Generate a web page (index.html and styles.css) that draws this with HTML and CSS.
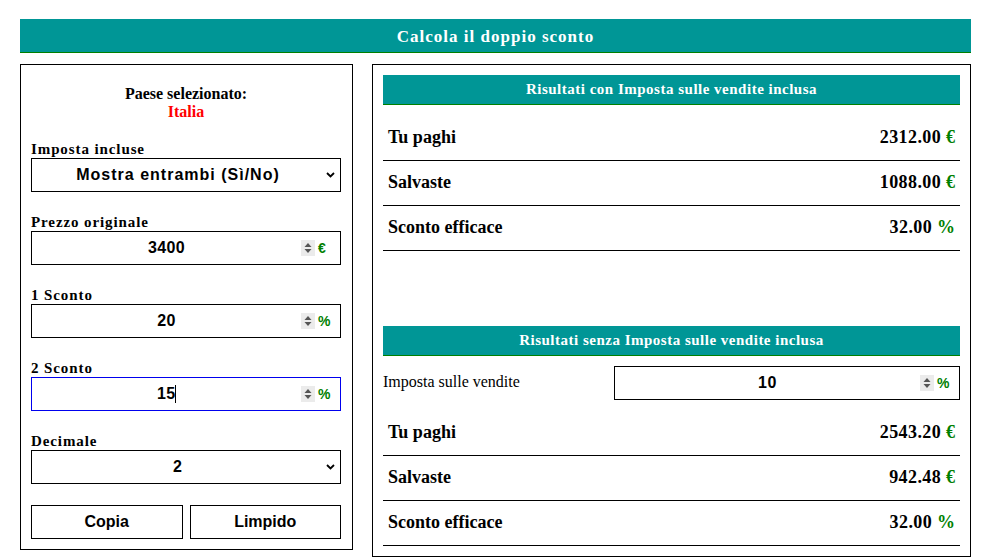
FILE: index.html
```html
<!DOCTYPE html>
<html lang="it">
<head>
<meta charset="utf-8">
<title>Calcola il doppio sconto</title>
<link rel="stylesheet" href="styles.css">
</head>
<body>
<div class="page">
  <header class="title">Calcola il doppio sconto</header>
  <div class="cols">
    <section class="left">
      <div class="country">
        <div>Paese selezionato:</div>
        <div class="red">Italia</div>
      </div>

      <div class="group first">
        <div class="lbl">Imposta incluse</div>
        <div class="field sel">
          <span class="txt sel-txt">Mostra entrambi (Sì/No)</span>
          <svg class="chev" width="9" height="6" viewBox="0 0 9 6"><path d="M1 1 L4.5 4.5 L8 1" fill="none" stroke="#000" stroke-width="1.8"/></svg>
        </div>
      </div>

      <div class="group">
        <div class="lbl">Prezzo originale</div>
        <div class="field num">
          <span class="txt">3400</span>
          <svg class="spin" width="14" height="16" viewBox="0 0 14 16"><rect width="14" height="16" fill="#ebebeb"/><path d="M3.5 7 L7 3 L10.5 7Z M3.5 9 L7 13 L10.5 9Z" fill="#555"/></svg>
          <span class="unit">€</span>
        </div>
      </div>

      <div class="group">
        <div class="lbl">1 Sconto</div>
        <div class="field num">
          <span class="txt">20</span>
          <svg class="spin" width="14" height="16" viewBox="0 0 14 16"><rect width="14" height="16" fill="#ebebeb"/><path d="M3.5 7 L7 3 L10.5 7Z M3.5 9 L7 13 L10.5 9Z" fill="#555"/></svg>
          <span class="unit">%</span>
        </div>
      </div>

      <div class="group">
        <div class="lbl">2 Sconto</div>
        <div class="field num focus">
          <span class="txt">15<span class="caret"></span></span>
          <svg class="spin" width="14" height="16" viewBox="0 0 14 16"><rect width="14" height="16" fill="#ebebeb"/><path d="M3.5 7 L7 3 L10.5 7Z M3.5 9 L7 13 L10.5 9Z" fill="#555"/></svg>
          <span class="unit">%</span>
        </div>
      </div>

      <div class="group">
        <div class="lbl">Decimale</div>
        <div class="field sel">
          <span class="txt sel-txt">2</span>
          <svg class="chev" width="9" height="6" viewBox="0 0 9 6"><path d="M1 1 L4.5 4.5 L8 1" fill="none" stroke="#000" stroke-width="1.8"/></svg>
        </div>
      </div>

      <div class="btns">
        <button class="btn">Copia</button>
        <button class="btn">Limpido</button>
      </div>
    </section>

    <section class="right">
      <div class="sec-h">Risultati con Imposta sulle vendite inclusa</div>
      <div class="rows">
        <div class="row"><span>Tu paghi</span><span class="val">2312.00 <span class="u">€</span></span></div>
        <div class="row"><span>Salvaste</span><span class="val">1088.00 <span class="u">€</span></span></div>
        <div class="row"><span>Sconto efficace</span><span class="val">32.00 <span class="u">%</span></span></div>
      </div>

      <div class="sec-h sec2">Risultati senza Imposta sulle vendite inclusa</div>
      <div class="tax">
        <span class="tax-l">Imposta sulle vendite</span>
        <div class="field num tax-in">
          <span class="txt">10</span>
          <svg class="spin" width="14" height="16" viewBox="0 0 14 16"><rect width="14" height="16" fill="#ebebeb"/><path d="M3.5 7 L7 3 L10.5 7Z M3.5 9 L7 13 L10.5 9Z" fill="#555"/></svg>
          <span class="unit">%</span>
        </div>
      </div>
      <div class="rows">
        <div class="row"><span>Tu paghi</span><span class="val">2543.20 <span class="u">€</span></span></div>
        <div class="row"><span>Salvaste</span><span class="val">942.48 <span class="u">€</span></span></div>
        <div class="row"><span>Sconto efficace</span><span class="val">32.00 <span class="u">%</span></span></div>
      </div>
    </section>
  </div>
</div>
</body>
</html>
```
FILE: styles.css
```css
body {
  margin: 0;
  background: #fff;
  color: #000;
  font-family: "Liberation Serif", "Times New Roman", serif;
}

.page {
  width: 951px;
  padding: 19px 12px 0 20px;
}

.title {
  height: 34px;
  box-sizing: border-box;
  padding-top: 3px;
  background: #009696;
  border-bottom: 1px solid #008000;
  color: #fff;
  font-weight: bold;
  font-size: 17px;
  letter-spacing: 1px;
  display: flex;
  align-items: center;
  justify-content: center;
}

.cols {
  display: flex;
  align-items: flex-start;
  gap: 19px;
  margin-top: 11px;
}

.left {
  width: 333px;
  box-sizing: border-box;
  border: 1px solid #000;
  padding: 20px 11px 10px 10px;
}

.country {
  text-align: center;
  font-weight: bold;
  font-size: 16px;
  line-height: 18px;
}

.red {
  color: #ff0000;
}

.group {
  margin-top: 22px;
}

.group.first {
  margin-top: 20px;
}

.lbl {
  font-weight: bold;
  font-size: 15px;
  line-height: 17px;
  letter-spacing: 0.9px;
}

.field {
  height: 34px;
  box-sizing: border-box;
  border: 1px solid #000;
  display: flex;
  align-items: center;
  font-family: "Liberation Sans", Arial, sans-serif;
  font-weight: bold;
  font-size: 16px;
  background: #fff;
}

.field.focus {
  border-color: #0000ee;
}

.txt {
  flex: 1;
  text-align: center;
  letter-spacing: 0.4px;
}

.sel-txt {
  letter-spacing: 1px;
}

.caret {
  display: inline-block;
  width: 1px;
  height: 18px;
  background: #000;
  vertical-align: -4px;
  margin-left: -0.4px;
}

.chev {
  margin-left: 2px;
  margin-right: 5px;
  flex: none;
}

.spin {
  flex: none;
  display: block;
}

.unit {
  flex: none;
  width: 16px;
  margin-left: 3px;
  margin-right: 6px;
  color: #008000;
  font-size: 14px;
}

.btns {
  display: flex;
  gap: 7px;
  margin-top: 21px;
}

.btn {
  flex: 1;
  height: 34px;
  background: #fff;
  border: 1px solid #000;
  padding: 0;
  font-family: "Liberation Sans", Arial, sans-serif;
  font-weight: bold;
  font-size: 16px;
  color: #000;
}

.right {
  width: 599px;
  box-sizing: border-box;
  border: 1px solid #000;
  padding: 10px;
}

.sec-h {
  height: 30px;
  box-sizing: border-box;
  background: #009696;
  border-bottom: 1px solid #008000;
  color: #fff;
  font-weight: bold;
  font-size: 15px;
  letter-spacing: 0.5px;
  display: flex;
  align-items: center;
  justify-content: center;
}

.sec2 {
  margin-top: 75px;
}

.rows {
  margin-top: 11px;
}

.row {
  height: 45px;
  box-sizing: border-box;
  border-bottom: 1px solid #000;
  display: flex;
  align-items: center;
  justify-content: space-between;
  padding: 0 5px 1px;
  font-weight: bold;
  font-size: 18px;
}

.val {
  letter-spacing: 0.4px;
}

.u {
  color: #008000;
  letter-spacing: 0;
}

.tax {
  display: flex;
  align-items: center;
  margin-top: 10px;
}

.tax-l {
  width: 40%;
  font-size: 16px;
  padding-bottom: 2px;
}

.tax-in {
  width: 60%;
}
```
